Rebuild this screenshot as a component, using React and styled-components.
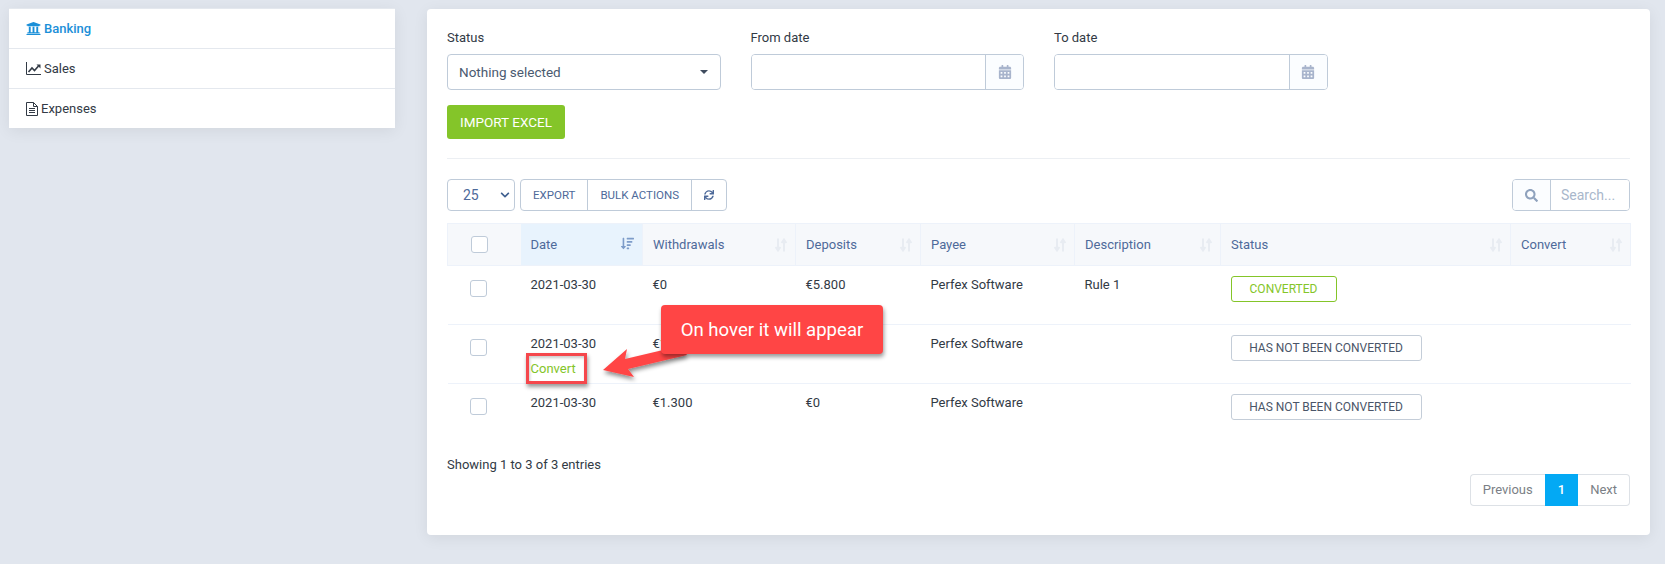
import styled, { createGlobalStyle } from "styled-components";
import { FaUniversity, FaCalendarAlt, FaSync, FaSearch, FaChevronDown, FaSortAmountDown } from "react-icons/fa";

const GlobalStyle = createGlobalStyle`
    html, body {
        margin: 0;
        padding: 0;
        background: #e1e6ee;
        font-family: "Roboto", "Liberation Sans", sans-serif;
        font-size: 13px;
        color: #323a45;
    }
    * { box-sizing: border-box; }
`;

const columns = [
    { label: "Date", width: 122, active: true },
    { label: "Withdrawals", width: 153 },
    { label: "Deposits", width: 125 },
    { label: "Payee", width: 154 },
    { label: "Description", width: 146 },
    { label: "Status", width: 290 },
    { label: "Convert", width: 120 },
];

const rows = [
    { withdrawals: "€0", deposits: "€5.800", description: "Rule 1", converted: true },
    { withdrawals: "€1.300", deposits: "€0", description: "", hovered: true },
    { withdrawals: "€1.300", deposits: "€0", description: "" },
];

function SortArrows() {
    return (
        <SortIcon viewBox="0 0 14 14" width="14" height="14">
            <path d="M4 0.5v11M1.6 9L4 12.5 6.4 9M10 13.5V2.5M7.6 5L10 1.5 12.4 5" fill="none" stroke="currentColor" strokeWidth="2" />
        </SortIcon>
    );
}

function LineChartIcon() {
    return (
        <svg viewBox="0 0 15 13" width="15" height="13">
            <path d="M0.5 0v12.5H15" fill="none" stroke="currentColor" strokeWidth="1" />
            <path d="M2.5 10L6 6l2.5 2.5L12.5 4" fill="none" stroke="currentColor" strokeWidth="1.6" />
            <path d="M10.5 2.5H14.5V6.5Z" fill="currentColor" />
        </svg>
    );
}

function FileTextIcon() {
    return (
        <svg viewBox="0 0 12 14" width="12" height="14">
            <path d="M0.5 0.5H7.5L11.5 4.5V13.5H0.5Z M7.5 0.5V4.5H11.5" fill="none" stroke="currentColor" strokeWidth="1" />
            <path d="M3 6.5H9M3 8.5H9M3 10.5H9" fill="none" stroke="currentColor" strokeWidth="1" />
        </svg>
    );
}

export default function App() {
    return (
        <Page>
            <GlobalStyle />
            <Sidebar>
                <SideItem $active><FaUniversity size={15} /><span>Banking</span></SideItem>
                <SideItem><LineChartIcon /><span>Sales</span></SideItem>
                <SideItem><FileTextIcon /><span>Expenses</span></SideItem>
            </Sidebar>
            <Panel>
                <Filters>
                    <Field>
                        <Label>Status</Label>
                        <SelectBox>
                            Nothing selected
                            <Caret />
                        </SelectBox>
                    </Field>
                    <Field>
                        <Label>From date</Label>
                        <DateBox>
                            <DateInput />
                            <DateAddon><FaCalendarAlt size={14} /></DateAddon>
                        </DateBox>
                    </Field>
                    <Field>
                        <Label>To date</Label>
                        <DateBox>
                            <DateInput />
                            <DateAddon><FaCalendarAlt size={14} /></DateAddon>
                        </DateBox>
                    </Field>
                </Filters>
                <ImportButton>IMPORT EXCEL</ImportButton>
                <Divider />
                <Toolbar>
                    <LengthSelect>25<FaChevronDown size={10} /></LengthSelect>
                    <ButtonGroup>
                        <ToolButton>EXPORT</ToolButton>
                        <ToolButton>BULK ACTIONS</ToolButton>
                        <ToolButton><FaSync size={10} /></ToolButton>
                    </ButtonGroup>
                    <SearchBox>
                        <SearchAddon><FaSearch size={13} /></SearchAddon>
                        <SearchInput placeholder="Search..." />
                    </SearchBox>
                </Toolbar>
                <Table>
                    <thead>
                        <tr>
                            <CheckHead><CheckBox /></CheckHead>
                            {columns.map((col) => (
                                <HeadCell key={col.label} $width={col.width} $active={col.active}>
                                    {col.label}
                                    {col.active ? <ActiveSort><FaSortAmountDown size={13} /></ActiveSort> : <SortArrows />}
                                </HeadCell>
                            ))}
                        </tr>
                    </thead>
                    <tbody>
                        {rows.map((row, i) => (
                            <tr key={i}>
                                <CheckCell><CheckBox /></CheckCell>
                                <Cell>
                                    2021-03-30
                                    {row.hovered && <ConvertLink>Convert</ConvertLink>}
                                </Cell>
                                <Cell>{row.withdrawals}</Cell>
                                <Cell>{row.deposits}</Cell>
                                <Cell>Perfex Software</Cell>
                                <Cell>{row.description}</Cell>
                                <Cell>
                                    {row.converted
                                        ? <Badge $converted>CONVERTED</Badge>
                                        : <Badge>HAS NOT BEEN CONVERTED</Badge>}
                                </Cell>
                                <Cell />
                            </tr>
                        ))}
                    </tbody>
                </Table>
                <Entries>Showing 1 to 3 of 3 entries</Entries>
                <Pagination>
                    <PageLink>Previous</PageLink>
                    <PageLink $current>1</PageLink>
                    <PageLink>Next</PageLink>
                </Pagination>
                <Highlight />
                <Arrow viewBox="0 0 120 50" width="120" height="50">
                    <defs>
                        <filter id="arrowShadow" x="-10%" y="-20%" width="125%" height="150%">
                            <feDropShadow dx="1" dy="3" stdDeviation="2" floodColor="#000" floodOpacity="0.45" />
                        </filter>
                    </defs>
                    <path d="M2 31L26 10L24 20L79 7L86 16L27 30L33 38Z" fill="#ff4545" filter="url(#arrowShadow)" />
                </Arrow>
                <Callout>On hover it will appear</Callout>
            </Panel>
        </Page>
    );
}

const Page = styled.div`
    display: flex;
    align-items: flex-start;
    gap: 32px;
    width: 1665px;
    height: 564px;
    padding: 8px 15px 0 9px;
    overflow: hidden;
`;

const Sidebar = styled.div`
    width: 386px;
    flex-shrink: 0;
    background: #fff;
    box-shadow: 0 3px 15px rgba(0, 0, 0, 0.07);
`;

const SideItem = styled.div`
    display: flex;
    align-items: center;
    gap: 3px;
    height: 40px;
    padding-left: 17px;
    border-top: 1px solid #e4e8ee;
    font-size: 13px;
    color: ${(p) => (p.$active ? "#1a8fd8" : "#323a45")};
    font-weight: ${(p) => (p.$active ? 500 : 400)};
`;

const Panel = styled.div`
    position: relative;
    width: 1223px;
    height: 526px;
    margin-top: 1px;
    padding: 20px;
    background: #fff;
    border-radius: 4px;
    box-shadow: 0 3px 15px rgba(0, 0, 0, 0.07);
`;

const Filters = styled.div`
    display: flex;
    gap: 30px;
`;

const Field = styled.div`
    width: 273.5px;
`;

const Label = styled.div`
    height: 25px;
    line-height: 18px;
    font-size: 13px;
    color: #323a45;
`;

const SelectBox = styled.div`
    position: relative;
    display: flex;
    align-items: center;
    height: 36px;
    padding-left: 11px;
    border: 1px solid #bfcbd9;
    border-radius: 4px;
    font-size: 13.5px;
    color: #4a5a70;
`;

const Caret = styled.span`
    position: absolute;
    right: 12px;
    top: 15px;
    border-left: 4px solid transparent;
    border-right: 4px solid transparent;
    border-top: 4px solid #3f4c5e;
`;

const DateBox = styled.div`
    display: flex;
    height: 36px;
    border: 1px solid #bfcbd9;
    border-radius: 4px;
    overflow: hidden;
`;

const DateInput = styled.input`
    flex: 1;
    min-width: 0;
    border: 0;
    outline: none;
`;

const DateAddon = styled.div`
    display: flex;
    align-items: center;
    justify-content: center;
    width: 38px;
    border-left: 1px solid #bfcbd9;
    background: #fbfdff;
    color: #a8b4cc;
`;

const ImportButton = styled.button`
    display: block;
    width: 118px;
    height: 34px;
    margin-top: 15px;
    border: 0;
    border-radius: 3px;
    background: #84c529;
    color: #fff;
    font-family: inherit;
    font-size: 13.5px;
    font-weight: 400;
`;

const Divider = styled.div`
    height: 1px;
    margin: 19px 0 20px;
    background: #eceff3;
`;

const Toolbar = styled.div`
    display: flex;
    align-items: stretch;
    gap: 5px;
    height: 32px;
    margin-bottom: 12px;
`;

const LengthSelect = styled.div`
    display: flex;
    align-items: center;
    justify-content: space-between;
    width: 68px;
    padding: 0 4px 0 15px;
    border: 1px solid #bfcbd9;
    border-radius: 4px;
    font-size: 14px;
    color: #4e6a9a;
    svg { color: #3f5f8f; }
`;

const ButtonGroup = styled.div`
    display: flex;
    border: 1px solid #bfcbd9;
    border-radius: 4px;
`;

const ToolButton = styled.div`
    display: flex;
    align-items: center;
    padding: 0 12px;
    font-size: 11.5px;
    color: #4e6a9a;
    & + & { border-left: 1px solid #bfcbd9; }
`;

const SearchBox = styled.div`
    display: flex;
    width: 118px;
    margin-left: auto;
    border: 1px solid #bfcbd9;
    border-radius: 4px;
    overflow: hidden;
`;

const SearchAddon = styled.div`
    display: flex;
    align-items: center;
    justify-content: center;
    width: 38px;
    flex-shrink: 0;
    border-right: 1px solid #bfcbd9;
    background: #fbfdff;
    color: #8fa2bd;
`;

const SearchInput = styled.input`
    flex: 1;
    min-width: 0;
    padding: 0 0 0 10px;
    border: 0;
    outline: none;
    font-family: inherit;
    font-size: 14px;
    &::placeholder { color: #a9b7cb; opacity: 1; }
`;

const Table = styled.table`
    width: 1183px;
    border-collapse: collapse;
    table-layout: fixed;
`;

const CheckHead = styled.th`
    width: 73px;
    height: 42px;
    padding: 0 0 0 23px;
    background: #f6f8fb;
    border: 1px solid #edf2fa;
    border-right: 0;
`;

const HeadCell = styled.th`
    position: relative;
    width: ${(p) => p.$width}px;
    height: 42px;
    padding: 0 10px;
    text-align: left;
    font-size: 13px;
    font-weight: 400;
    color: #4e6a9a;
    background: ${(p) => (p.$active ? "#e8f3fd" : "#f6f8fb")};
    border: 1px solid #edf2fa;
    border-left: ${(p) => (p.$active ? "0" : "1px solid #edf2fa")};
`;

const SortIcon = styled.svg`
    position: absolute;
    right: 7px;
    top: 14px;
    color: #e8ecf2;
`;

const ActiveSort = styled.span`
    position: absolute;
    right: 8px;
    top: 13px;
    color: #7d9cc9;
`;

const CheckCell = styled.td`
    height: 59px;
    padding: 14px 0 0 22px;
    vertical-align: top;
    border-bottom: 1px solid #edf2fa;
    tr:last-child & { border-bottom: 0; }
`;

const Cell = styled.td`
    padding: 11px 10px 0;
    vertical-align: top;
    line-height: 15px;
    border-bottom: 1px solid #edf2fa;
    tr:last-child & { border-bottom: 0; }
`;

const CheckBox = styled.div`
    width: 17px;
    height: 17px;
    border: 1px solid #bfcbd9;
    border-radius: 3px;
    background: #fff;
`;

const ConvertLink = styled.div`
    margin-top: 10px;
    color: #84c529;
`;

const Badge = styled.div`
    display: flex;
    align-items: center;
    justify-content: center;
    width: ${(p) => (p.$converted ? "106px" : "191px")};
    height: 26px;
    margin-top: -1px;
    border: 1px solid ${(p) => (p.$converted ? "#84c529" : "#c4cdd8")};
    border-radius: 3px;
    font-size: 12px;
    color: ${(p) => (p.$converted ? "#84c529" : "#4a5568")};
`;

const Entries = styled.div`
    margin-top: 14px;
    line-height: 16px;
`;

const Pagination = styled.div`
    display: flex;
    justify-content: flex-end;
    margin-top: 1px;
`;

const PageLink = styled.div`
    display: flex;
    align-items: center;
    justify-content: center;
    height: 32px;
    padding: 0 12px;
    border: 1px solid ${(p) => (p.$current ? "#03a9f4" : "#dde1e6")};
    border-left-width: ${(p) => (p.$current ? "1px" : "0")};
    border-right-width: ${(p) => (p.$current ? "1px" : "0")};
    background: ${(p) => (p.$current ? "#03a9f4" : "#fff")};
    color: ${(p) => (p.$current ? "#fff" : "#7b7f86")};
    font-weight: ${(p) => (p.$current ? 500 : 400)};
    &:first-child { border-left-width: 1px; border-radius: 4px 0 0 4px; }
    &:last-child { border-right-width: 1px; border-radius: 0 4px 4px 0; }
`;

const Highlight = styled.div`
    position: absolute;
    left: 99px;
    top: 344px;
    width: 61px;
    height: 31px;
    border: 3px solid #f5474c;
    box-shadow: 1px 3px 4px rgba(0, 0, 0, 0.4), inset 1px 2px 3px rgba(0, 0, 0, 0.2);
`;

const Arrow = styled.svg`
    position: absolute;
    left: 174px;
    top: 330px;
    overflow: visible;
`;

const Callout = styled.div`
    position: absolute;
    left: 234px;
    top: 296px;
    width: 222px;
    height: 49px;
    display: flex;
    align-items: center;
    justify-content: center;
    background: #ff4545;
    border-radius: 4px;
    color: #fff;
    font-size: 18.6px;
    box-shadow: 1px 3px 4px rgba(0, 0, 0, 0.4);
`;
